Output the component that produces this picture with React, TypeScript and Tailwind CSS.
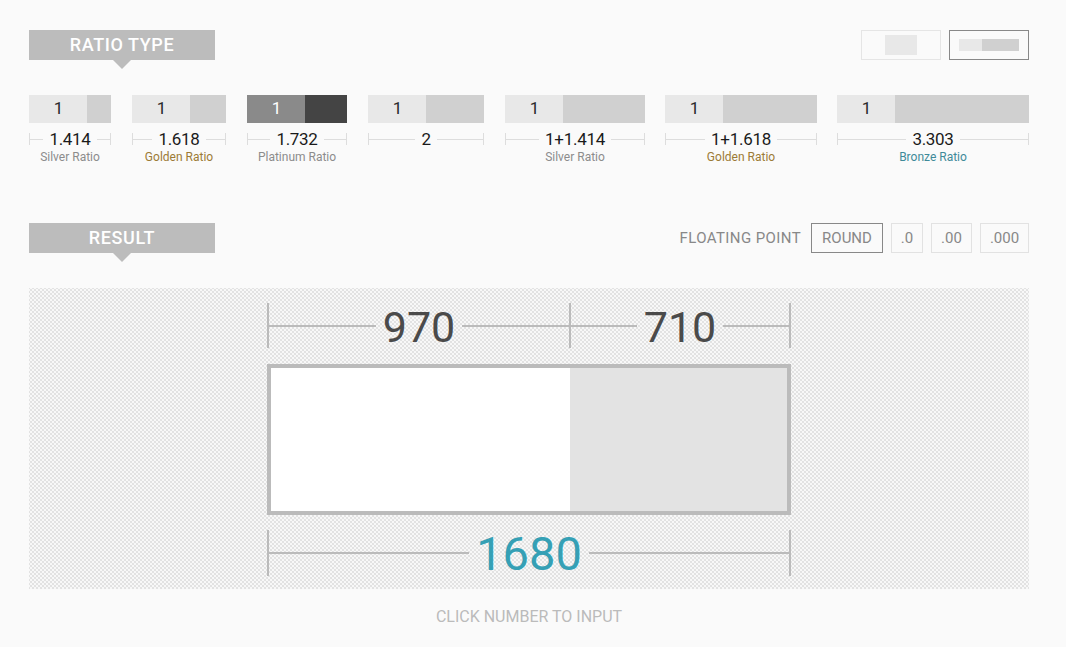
import React from "react";

type Item = { w: number; ml: number; v: string; label?: string; lc?: string; dark?: boolean };

const items: Item[] = [
  { w: 82, ml: 0, v: "1.414", label: "Silver Ratio", lc: "text-[#8c8c8c]" },
  { w: 94, ml: 21, v: "1.618", label: "Golden Ratio", lc: "text-[#9c7a36]" },
  { w: 100, ml: 21, v: "1.732", label: "Platinum Ratio", lc: "text-[#8c8c8c]", dark: true },
  { w: 116, ml: 21, v: "2" },
  { w: 140, ml: 21, v: "1+1.414", label: "Silver Ratio", lc: "text-[#8c8c8c]" },
  { w: 152, ml: 20, v: "1+1.618", label: "Golden Ratio", lc: "text-[#9c7a36]" },
  { w: 192, ml: 20, v: "3.303", label: "Bronze Ratio", lc: "text-[#3f8a99]" },
];

function Tag({ text }: { text: string }) {
  return (
    <div className="relative h-[30px] w-[186px]">
      <div className="flex h-full w-full items-center justify-center bg-[#bcbcbc] text-[18px] font-medium leading-none tracking-[0.6px] text-white">
        {text}
      </div>
      <div className="absolute left-[84px] top-[30px] h-0 w-0 border-l-[9px] border-r-[9px] border-t-[9px] border-l-transparent border-r-transparent border-t-[#bcbcbc]" />
    </div>
  );
}

function RatioItem({ it }: { it: Item }) {
  return (
    <div className="flex flex-col" style={{ width: it.w, marginLeft: it.ml }}>
      <div className="flex h-[28px]">
        <div
          className={
            it.dark
              ? "flex w-[58px] items-center justify-center pl-[1px] bg-[#8a8a8a] text-[17px] text-white"
              : "flex w-[58px] items-center justify-center pl-[1px] bg-[#e8e8e8] text-[17px] text-[#2a2a2a]"
          }
        >
          1
        </div>
        <div className={it.dark ? "flex-1 bg-[#444444]" : "flex-1 bg-[#d0d0d0]"} />
      </div>
      <div className="mt-[6px] flex h-[20px] items-center">
        <div className="h-[12px] w-px bg-[#dddddd]" />
        <div className="h-px flex-1 bg-[#dddddd]" />
        <span className="px-[6px] text-[17px] leading-none tracking-[-0.3px] text-[#1a1a1a]">{it.v}</span>
        <div className="h-px flex-1 bg-[#dddddd]" />
        <div className="h-[12px] w-px bg-[#dddddd]" />
      </div>
      <div className={"h-[16px] text-center text-[12px] leading-[16px] " + (it.lc ?? "")}>{it.label ?? ""}</div>
    </div>
  );
}

export default function App() {
  return (
    <div className="min-h-screen w-full bg-[#fafafa] font-['Roboto',sans-serif]">
      <div className="ml-[29px] w-[1000px] pt-[30px]">
        {/* header */}
        <div className="flex items-start justify-between">
          <Tag text="RATIO TYPE" />
          <div className="flex gap-[8px]">
            <div className="flex h-[30px] w-[80px] items-center justify-center border border-[#e5e5e5]">
              <div className="h-[20px] w-[32px] bg-[#e8e8e8]" />
            </div>
            <div className="flex h-[30px] w-[80px] items-center justify-center border border-[#888888]">
              <div className="flex h-[12px] w-[60px]">
                <div className="w-[23px] bg-[#e8e8e8]" />
                <div className="flex-1 bg-[#d0d0d0]" />
              </div>
            </div>
          </div>
        </div>

        {/* ratio items */}
        <div className="mt-[35px] flex">
          {items.map((it, i) => (
            <RatioItem key={i} it={it} />
          ))}
        </div>

        {/* result header */}
        <div className="mt-[58px] flex items-start justify-between">
          <Tag text="RESULT" />
          <div className="flex items-center">
            <span className="mr-[10px] text-[15px] tracking-[0.4px] text-[#888]">FLOATING POINT</span>
            <div className="flex gap-[8px]">
              <div className="flex h-[30px] w-[72px] items-center justify-center border border-[#888] text-[15px] text-[#888]">ROUND</div>
              <div className="flex h-[30px] w-[32px] items-center justify-center border border-[#e2e2e2] text-[15px] text-[#888]">.0</div>
              <div className="flex h-[30px] w-[41px] items-center justify-center border border-[#e2e2e2] text-[15px] text-[#888]">.00</div>
              <div className="flex h-[30px] w-[49px] items-center justify-center border border-[#e2e2e2] text-[15px] text-[#888]">.000</div>
            </div>
          </div>
        </div>

        {/* result area */}
        <div className="mt-[35px] flex h-[301px] flex-col items-center bg-[#f8f8f8] bg-[radial-gradient(circle,#e2e2e2_0.7px,transparent_1px),radial-gradient(circle,#e2e2e2_0.7px,transparent_1px)] bg-[length:4px_4px] bg-[position:0_0,2px_2px] pt-[15px]">
          <div className="flex h-[45px] w-[524px] items-center">
            <div className="h-full w-[2px] bg-[#bbb]" />
            <div className="flex w-[300px] items-center">
              <div className="h-[2px] flex-1 bg-[#bbb]" />
              <span className="px-[7px] pt-[3px] text-[43px] leading-none text-[#4a4a4a]">970</span>
              <div className="h-[2px] flex-1 bg-[#bbb]" />
            </div>
            <div className="h-full w-[2px] bg-[#bbb]" />
            <div className="flex w-[218px] items-center">
              <div className="h-[2px] flex-1 bg-[#bbb]" />
              <span className="px-[7px] pt-[3px] text-[43px] leading-none text-[#4a4a4a]">710</span>
              <div className="h-[2px] flex-1 bg-[#bbb]" />
            </div>
            <div className="h-full w-[2px] bg-[#bbb]" />
          </div>

          <div className="mt-[16px] flex h-[151px] w-[524px] border-4 border-[#bbb]">
            <div className="w-[299px] bg-white" />
            <div className="flex-1 bg-[#e3e3e3]" />
          </div>

          <div className="mt-[15px] flex h-[46px] w-[524px] items-center">
            <div className="h-full w-[2px] bg-[#bbb]" />
            <div className="h-[2px] flex-1 bg-[#bbb]" />
            <span className="px-[7px] text-[47px] leading-none text-[#35a0b5]">1680</span>
            <div className="h-[2px] flex-1 bg-[#bbb]" />
            <div className="h-full w-[2px] bg-[#bbb]" />
          </div>
        </div>

        <div className="mt-[18px] text-center text-[16px] leading-[20px] text-[#bbbbbb]">CLICK NUMBER TO INPUT</div>
      </div>
    </div>
  );
}
